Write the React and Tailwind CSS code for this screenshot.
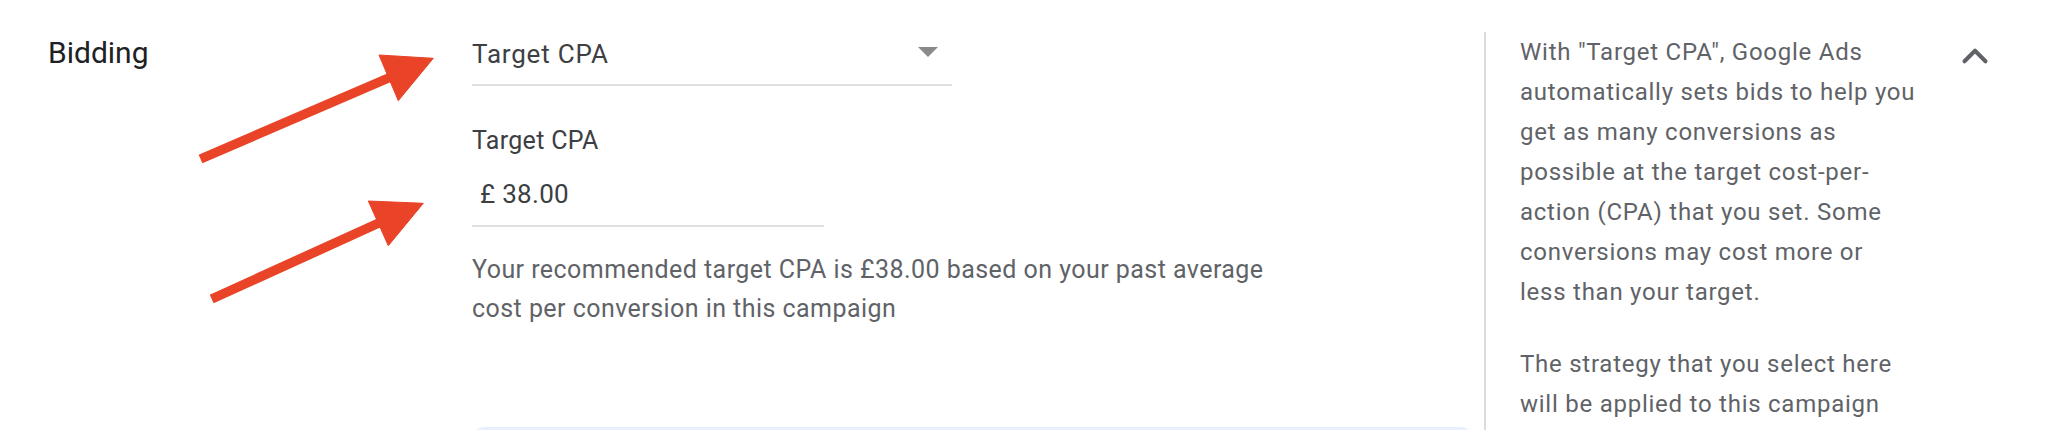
import { ChevronUp } from "lucide-react";

const font = { fontFamily: "Roboto, 'Noto Sans', Arial, sans-serif" };

function Arrows() {
  return (
    <svg className="absolute inset-0 pointer-events-none" width="2048" height="430">
      <g fill="#e94328" stroke="#e94328">
        <line x1="200.5" y1="159" x2="392" y2="76.5" strokeWidth="9.5" />
        <polygon points="433.3,58.3 379,55 398.3,100.7" strokeWidth="1" strokeLinejoin="round" />
        <line x1="211.7" y1="299" x2="381" y2="222" strokeWidth="9.5" />
        <polygon points="423.3,203.3 368.3,201 388.3,245.7" strokeWidth="1" strokeLinejoin="round" />
      </g>
    </svg>
  );
}

function Dropdown() {
  return (
    <div className="w-[480px] flex items-center justify-between border-b-2 border-[#e0e0e0] pb-[12px]">
      <span className="text-[26px] leading-[36px] tracking-[0.8px] text-[#3c4043]">Target CPA</span>
      <svg width="20" height="10" viewBox="0 0 20 10" className="mr-[14px] -mt-[4px]">
        <polygon points="0,0 20,0 10,10" fill="#8a8a8a" />
      </svg>
    </div>
  );
}

export default function App() {
  return (
    <div className="relative w-[2048px] h-[430px] overflow-hidden bg-white flex items-start" style={font}>
      <div className="w-[472px] pl-[48px] pt-[33px]">
        <h2 className="text-[30px] leading-[40px] text-[#202124]">Bidding</h2>
      </div>

      <div className="w-[1012px] pt-[36px]">
        <Dropdown />

        <div className="mt-[38px] text-[25px] leading-[34px] tracking-[0.3px] text-[#3c4043]">Target CPA</div>
        <div className="mt-[18px] w-[352px] border-b-2 border-[#e0e0e0] pb-[13px] pl-[8px]">
          <span className="text-[26px] leading-[36px] tracking-[0.3px] text-[#3c4043]">£ 38.00</span>
        </div>

        <p className="mt-[23px] text-[25px] leading-[39px] tracking-[0.45px] text-[#5f6368]">
          Your recommended target CPA is £38.00 based on your past average
          <br />
          cost per conversion in this campaign
        </p>

        <div className="mt-[99px] w-[1001px] h-[80px] rounded-[12px] bg-[#e8f0fe]" />
      </div>

      <div className="mt-[32px] h-[400px] border-l-2 border-[#dadce0] pl-[34px] flex items-start">
        <div className="w-[410px] text-[24px] leading-[40px] tracking-[0.75px] text-[#5f6368]">
          <p>
            With "Target CPA", Google Ads
            <br />
            automatically sets bids to help you
            <br />
            get as many conversions as
            <br />
            possible at the target cost-per-
            <br />
            action (CPA) that you set. Some
            <br />
            conversions may cost more or
            <br />
            less than your target.
          </p>
          <p className="mt-[32px]">
            The strategy that you select here
            <br />
            will be applied to this campaign
          </p>
        </div>
        <ChevronUp className="ml-[24px] mt-[3px] text-[#5f6368]" size={42} strokeWidth={2.3} />
      </div>

      <Arrows />
    </div>
  );
}
